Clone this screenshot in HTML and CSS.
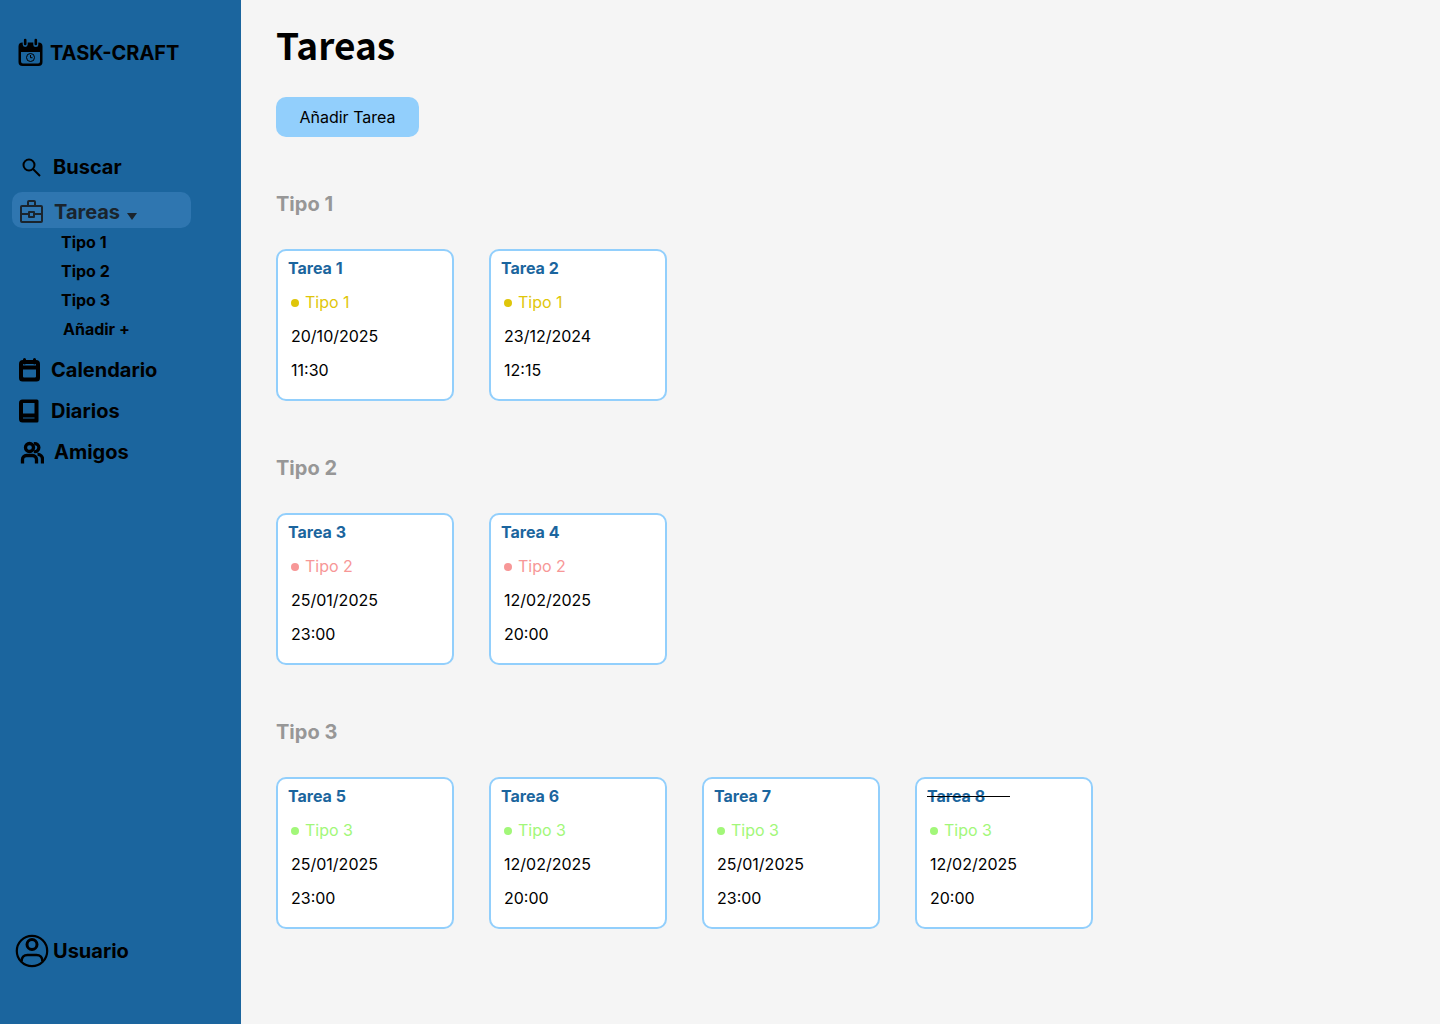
FILE: index.html
```html
<!DOCTYPE html>
<html lang="es">
<head>
<meta charset="utf-8">
<meta name="viewport" content="width=device-width, initial-scale=1">
<title>Task-Craft – Tareas</title>
<link rel="stylesheet" href="styles.css">
</head>
<body>
<div class="app">
  <aside class="sidebar">
    <a class="brand" href="#">
      <svg width="25" height="29" viewBox="0 0 25 29" aria-hidden="true">
        <path fill="currentColor" fill-rule="evenodd" d="M4.500 4.500h.2v2a2.500 2.500 0 0 0 5 0v-2h5.600v2a2.500 2.500 0 0 0 5 0v-2h.2a4 4 0 0 1 4 4v15.500a4 4 0 0 1-4 4h-16a4 4 0 0 1-4-4V8.500a4 4 0 0 1 4-4zM3 14v9.500a2 2 0 0 0 2 2h15a2 2 0 0 0 2-2V14z"/>
        <path fill="none" stroke="currentColor" stroke-width="2.600" stroke-linecap="round" d="M7.200 2v4M17.800 2v4"/>
        <circle cx="12.500" cy="19.500" r="4" fill="none" stroke="currentColor" stroke-width="1"/>
        <path fill="none" stroke="currentColor" d="M12.500 17v2.700h2"/>
      </svg>
      <span>TASK-CRAFT</span>
    </a>
    <nav class="nav">
      <a class="nav-item" href="#">
        <svg class="nav-icon" viewBox="0 0 24 24" aria-hidden="true"><g fill="none" stroke="currentColor" stroke-width="2"><circle cx="10" cy="10" r="5.500"/><path d="M14 14l7 7"/></g></svg>
        <span>Buscar</span>
      </a>
      <a class="nav-item nav-item-active" href="#" aria-current="page">
        <svg class="nav-icon" viewBox="0 0 24 24" aria-hidden="true"><g fill="none" stroke="currentColor" stroke-width="2" stroke-linejoin="round"><rect x="1" y="6" width="21" height="16" rx="1"/><path d="M8 6V2A1 1 0 0 1 9 1h5a1 1 0 0 1 1 1v4M1 14h8M14 14h8"/><rect x="9" y="12" width="5" height="5"/></g></svg>
        <span>Tareas</span>
        <svg class="caret" width="10" height="7" viewBox="0 0 10 7" aria-hidden="true"><path fill="currentColor" d="M0 0h10L5 7z"/></svg>
      </a>
      <ul class="subnav">
        <li><a href="#">Tipo 1</a></li>
        <li><a href="#">Tipo 2</a></li>
        <li><a href="#">Tipo 3</a></li>
        <li class="subnav-add"><a href="#">Añadir +</a></li>
      </ul>
      <a class="nav-item nav-item-tall" href="#">
        <svg class="nav-icon" viewBox="0 0 24 24" aria-hidden="true"><path fill="currentColor" fill-rule="evenodd" d="M6 1.500a1.500 1.500 0 0 1 3 0V2h7v-.5a1.500 1.500 0 0 1 3 0V2a4 4 0 0 1 4 4v14a3.500 3.500 0 0 1-3.500 3.500H5.500A3.500 3.500 0 0 1 2 20V6a4 4 0 0 1 4-4zM6 11.500v7a1 1 0 0 0 1 1h11a1 1 0 0 0 1-1v-7zM6 6v1.500h13V6a3 3 0 0 1-3 0H9a3 3 0 0 1-3 0z"/></svg>
        <span>Calendario</span>
      </a>
      <a class="nav-item nav-item-tall" href="#">
        <svg class="nav-icon" viewBox="0 0 24 24" aria-hidden="true"><path fill="currentColor" fill-rule="evenodd" d="M5.500 .5H20A1.500 1.500 0 0 1 21.500 2v20a1.500 1.500 0 0 1-1.500 1.500H5.500A3.500 3.500 0 0 1 2 20V4A3.500 3.500 0 0 1 5.500 .5zM6 4v10.500h11.500V4zM6 18.500v1h11.500v-1z"/></svg>
        <span>Diarios</span>
      </a>
      <a class="nav-item nav-item-tall nav-item-inset" href="#">
        <svg class="nav-icon" viewBox="0 0 24 24" aria-hidden="true"><g fill="none" stroke="currentColor" stroke-width="3.300"><circle cx="9.500" cy="7.500" r="4"/><path d="M14 3.700a4 4 0 1 1 0 7.800M2.500 23.500v-4a4 4 0 0 1 4-4h6a4 4 0 0 1 4 4v4M17.500 14.500a4.500 4.500 0 0 1 5 4.500v4.500"/></g></svg>
        <span>Amigos</span>
      </a>
    </nav>
    <a class="user" href="#">
      <svg width="34" height="34" viewBox="0 0 34 34" aria-hidden="true"><g fill="none" stroke="currentColor"><circle cx="17" cy="17" r="15.200" stroke-width="2.200"/><circle cx="17" cy="10.500" r="5" stroke-width="3"/><path stroke-width="2.600" d="M6.500 27.500c0-4 2.500-6.500 6-6.500h9c3.500 0 6 2.500 6 6.500"/></g></svg>
      <span>Usuario</span>
    </a>
  </aside>

  <main class="main">
    <h1 class="title">Tareas</h1>
    <button class="add" type="button">Añadir Tarea</button>

    <section class="group yellow">
      <h2 class="group-title">Tipo 1</h2>
      <div class="cards">
        <article class="card"><h3 class="card-title">Tarea 1</h3><p class="tag">Tipo 1</p><p>20/10/2025</p><p>11:30</p></article>
        <article class="card"><h3 class="card-title">Tarea 2</h3><p class="tag">Tipo 1</p><p>23/12/2024</p><p>12:15</p></article>
      </div>
    </section>

    <section class="group red">
      <h2 class="group-title">Tipo 2</h2>
      <div class="cards">
        <article class="card"><h3 class="card-title">Tarea 3</h3><p class="tag">Tipo 2</p><p>25/01/2025</p><p>23:00</p></article>
        <article class="card"><h3 class="card-title">Tarea 4</h3><p class="tag">Tipo 2</p><p>12/02/2025</p><p>20:00</p></article>
      </div>
    </section>

    <section class="group green">
      <h2 class="group-title">Tipo 3</h2>
      <div class="cards">
        <article class="card"><h3 class="card-title">Tarea 5</h3><p class="tag">Tipo 3</p><p>25/01/2025</p><p>23:00</p></article>
        <article class="card"><h3 class="card-title">Tarea 6</h3><p class="tag">Tipo 3</p><p>12/02/2025</p><p>20:00</p></article>
        <article class="card"><h3 class="card-title">Tarea 7</h3><p class="tag">Tipo 3</p><p>25/01/2025</p><p>23:00</p></article>
        <article class="card"><h3 class="card-title done">Tarea 8</h3><p class="tag">Tipo 3</p><p>12/02/2025</p><p>20:00</p></article>
      </div>
    </section>
  </main>
</div>
</body>
</html>
```
FILE: styles.css
```css
* { box-sizing: border-box; }

body, h1, h2, h3, p, ul { margin: 0; padding: 0; }

body {
  background: #f5f5f5;
  color: #000;
  font: 16px/20px Inter, sans-serif;
}

a { color: inherit; text-decoration: none; }

.app { display: flex; min-height: 100vh; }

/* Sidebar */
.sidebar {
  display: flex;
  flex-direction: column;
  flex: 0 0 241px;
  padding: 36px 12px 56px;
  background: #1b659e;
  font-size: 20px;
  font-weight: 700;
  line-height: 24px;
}

.brand { display: flex; align-items: center; gap: 7px; height: 33px; padding-left: 6px; }

.nav { margin-top: 80px; }

.nav-item { display: flex; align-items: center; gap: 10px; height: 36px; padding: 0 7px; }

.nav-icon { width: 24px; height: 24px; flex: none; }

.nav-item-active {
  width: 179px;
  margin-top: 7px;
  padding: 4px 8px 0;
  border-radius: 10px;
  background: #2f76b0;
  color: #1a242d;
}

.caret { margin: 8px 0 0 -3px; }

.subnav { margin-bottom: 5px; padding-left: 49px; list-style: none; font-size: 16px; line-height: 29px; }

.subnav-add { padding-left: 2px; }

.nav-item-tall { height: 41px; padding-left: 5px; }

.nav-item-inset { padding-left: 8px; }

.user { display: flex; align-items: center; gap: 4px; margin-top: auto; padding-left: 3px; }

/* Content */
.main { flex: 1; padding: 20px 35px 56px; }

.title { font: 700 37px/48px "Noto Sans CJK JP", sans-serif; }

.add {
  display: block;
  width: 143px;
  height: 40px;
  margin-top: 29px;
  padding: 0;
  border: 0;
  border-radius: 10px;
  background: #92cffc;
  color: #000;
  font: inherit;
}

.group { margin-top: 55px; }

.group-title { color: #979797; font-size: 20px; line-height: 24px; }

.cards { display: flex; flex-wrap: wrap; gap: 35px; margin-top: 33px; }

.card {
  width: 178px;
  padding: 0 10px 12px;
  border: 2px solid #92cffc;
  border-radius: 10px;
  background: #fff;
  line-height: 34px;
}

.card p { padding-left: 3px; }

.card-title { color: #1b659e; font-size: 16px; line-height: 34px; }

.card .tag { display: flex; align-items: center; gap: 6px; }

.tag::before { width: 8px; height: 8px; margin-top: 2px; border-radius: 50%; background: currentColor; content: ""; }

.yellow .tag { color: #dfc60a; }
.red .tag { color: #f79797; }
.green .tag { color: #a2f779; }

.done { position: relative; }

.done::after {
  position: absolute;
  top: 17px;
  left: 0;
  width: 83px;
  height: 1px;
  background: #000;
  content: "";
}
```
